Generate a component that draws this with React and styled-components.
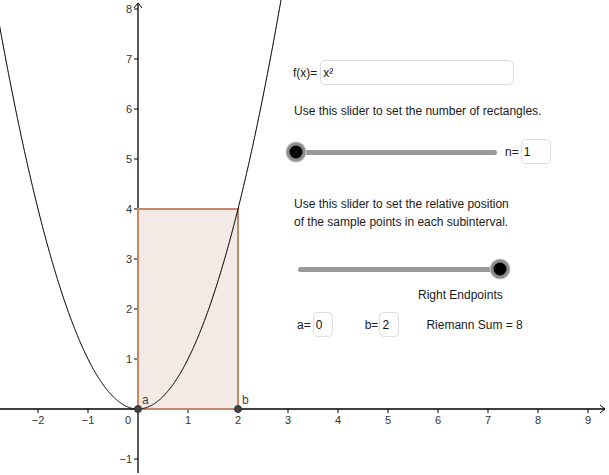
import styled, { createGlobalStyle } from "styled-components"

const GlobalStyle = createGlobalStyle`
  html, body {
    margin: 0;
    padding: 0;
    background: #ffffff;
  }
  body {
    font-family: "Liberation Sans", Arial, sans-serif;
  }
`

const Canvas = styled.div`
  position: relative;
  width: 609px;
  height: 475px;
  overflow: hidden;
  background: #ffffff;
`

const GraphSvg = styled.svg`
  display: block;
  position: absolute;
  inset: 0;
`

const Panel = styled.div`
  position: absolute;
  left: 287px;
  top: 60px;
  width: 300px;
  display: flex;
  flex-direction: column;
  font-size: 12px;
  color: #1a1a1a;
`

const Row = styled.div`
  display: flex;
  align-items: center;
  height: 25px;
  margin-top: ${(p) => p.$mt || 0}px;
  padding-left: ${(p) => p.$pl || 0}px;
`

const Label = styled.span`
  white-space: nowrap;
  margin-right: ${(p) => (p.$mr === undefined ? 1 : p.$mr)}px;
  margin-left: ${(p) => p.$ml || 0}px;
`

const InputBox = styled.div`
  box-sizing: border-box;
  width: ${(p) => p.$w}px;
  height: 25px;
  border: 1px solid #dcdcdc;
  border-radius: 5px;
  padding-left: 2px;
  display: flex;
  align-items: center;
  font-size: 12px;
  color: #111;
`

const Caption = styled.p`
  margin: ${(p) => p.$mt || 0}px 0 0;
  padding-left: ${(p) => p.$pl || 7}px;
  line-height: 18px;
  white-space: nowrap;
`

const SliderWrap = styled.div`
  position: relative;
  width: ${(p) => p.$w}px;
  height: 18px;
  margin-left: ${(p) => p.$ml || 0}px;
  flex-shrink: 0;
`

const Track = styled.div`
  position: absolute;
  left: 9px;
  right: 9px;
  top: 7px;
  height: 5px;
  border-radius: 3px;
  background: #999999;
`

const Knob = styled.div`
  position: absolute;
  top: 0;
  width: 13px;
  height: 13px;
  border-radius: 50%;
  background: #000000;
  border: 3px solid #8c8c8c;
  box-shadow: 0 0 0 1px #c8c8c8;
  transform: translate(-9.5px, -0.5px);
`

function Slider({ width, value, ml }) {
  const span = width - 18
  return (
    <SliderWrap $w={width} $ml={ml}>
      <Track />
      <Knob style={{ left: 9 + span * value }} />
    </SliderWrap>
  )
}

const xTicks = [-2, -1, 1, 2, 3, 4, 5, 6, 7, 8, 9]
const yTicks = [-1, 1, 2, 3, 4, 5, 6, 7, 8]
const ox = 138
const oy = 409
const u = 50

function fmt(n) {
  return n < 0 ? "\u2212" + Math.abs(n) : String(n)
}

function parabola() {
  const pts = []
  for (let x = -2.95; x <= 2.95; x += 0.02) {
    pts.push(`${(ox + u * x).toFixed(2)},${(oy - u * x * x).toFixed(2)}`)
  }
  return "M" + pts.join(" L")
}

function Graph() {
  return (
    <GraphSvg width="609" height="475" viewBox="0 0 609 475">
      <rect x={ox} y={oy - 4 * u} width={2 * u} height={4 * u} fill="#f3eae5" />
      <line x1="0" y1={oy} x2="605" y2={oy} stroke="#000" strokeWidth="1.3" />
      <path d="M600,405 L605,409 L600,413" fill="none" stroke="#000" strokeWidth="1" />
      <line x1={ox} y1="3" x2={ox} y2="473" stroke="#000" strokeWidth="1.3" />
      <path d="M134,8 L138,3 L142,8" fill="none" stroke="#000" strokeWidth="1" />
      {xTicks.map((t) => (
        <g key={"x" + t}>
          <line x1={ox + u * t} y1={oy} x2={ox + u * t} y2={oy + 4} stroke="#000" strokeWidth="1" />
          <text
            x={ox + u * t}
            y={oy + 15}
            textAnchor="middle"
            fontSize="11"
            fontFamily="Liberation Sans, Arial, sans-serif"
            fill="#333"
          >
            {fmt(t)}
          </text>
        </g>
      ))}
      <text x="131" y={oy + 15} textAnchor="end" fontSize="11" fontFamily="Liberation Sans, Arial, sans-serif" fill="#333">
        0
      </text>
      {yTicks.map((t) => (
        <g key={"y" + t}>
          <line x1={ox - 4} y1={oy - u * t} x2={ox} y2={oy - u * t} stroke="#000" strokeWidth="1" />
          <text
            x="132"
            y={oy - u * t + 4}
            textAnchor="end"
            fontSize="11"
            fontFamily="Liberation Sans, Arial, sans-serif"
            fill="#333"
          >
            {fmt(t)}
          </text>
        </g>
      ))}
      <rect
        x={ox}
        y={oy - 4 * u}
        width={2 * u}
        height={4 * u}
        fill="none"
        stroke="#c4876b"
        strokeWidth="2"
      />
      <path d={parabola()} fill="none" stroke="#000" strokeWidth="1" />
      <circle cx={ox} cy={oy} r="3.5" fill="#444" stroke="#333" strokeWidth="1" />
      <circle cx={ox + 2 * u} cy={oy} r="3.5" fill="#444" stroke="#333" strokeWidth="1" />
      <text x="142" y="404" fontSize="12" fontFamily="Liberation Sans, Arial, sans-serif" fill="#444">
        a
      </text>
      <text x="242" y="404" fontSize="12" fontFamily="Liberation Sans, Arial, sans-serif" fill="#444">
        b
      </text>
    </GraphSvg>
  )
}

export default function App() {
  return (
    <>
      <GlobalStyle />
      <Canvas>
        <Graph />
        <Panel>
          <Row $pl={6}>
            <Label $mr={3}>f(x)=</Label>
            <InputBox $w={194}>x²</InputBox>
          </Row>
          <Caption $mt={17}>Use this slider to set the number of rectangles.</Caption>
          <Row $mt={19}>
            <Slider width={219} value={0} />
            <Label $ml={-1} $mr={2}>n=</Label>
            <InputBox $w={30}>1</InputBox>
          </Row>
          <Caption $mt={31}>
            Use this slider to set the relative position
            <br />
            of the sample points in each subinterval.
          </Caption>
          <Row $mt={25}>
            <Slider width={220} value={1} ml={2} />
          </Row>
          <Caption $mt={5} $pl={131}>Right Endpoints</Caption>
          <Row $mt={8} $pl={10}>
            <Label $mr={2}>a=</Label>
            <InputBox $w={20}>0</InputBox>
            <Label $ml={32}>b=</Label>
            <InputBox $w={20}>2</InputBox>
            <Label $ml={27}>Riemann Sum = 8</Label>
          </Row>
        </Panel>
      </Canvas>
    </>
  )
}
